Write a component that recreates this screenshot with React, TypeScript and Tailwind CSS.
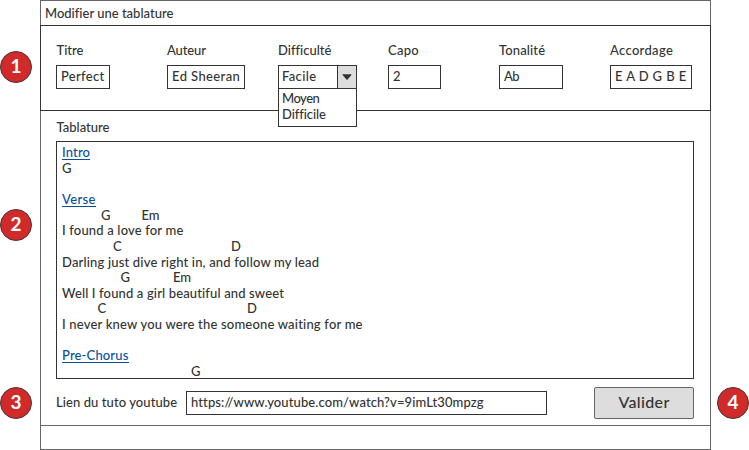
type Part = { text: string; className: string };

const lines: { parts: Part[]; link?: boolean }[] = [
  { link: true, parts: [{ text: "Intro", className: "tracking-[0.15px]" }] },
  { parts: [{ text: "G", className: "" }] },
  { parts: [] },
  { link: true, parts: [{ text: "Verse", className: "tracking-[0.35px]" }] },
  { parts: [{ text: "G", className: "w-[40.5px] ml-[39px]" }, { text: "Em", className: "" }] },
  { parts: [{ text: "I found a love for me", className: "tracking-[0.17px]" }] },
  { parts: [{ text: "C", className: "w-[118px] ml-[51px]" }, { text: "D", className: "" }] },
  { parts: [{ text: "Darling just dive right in, and follow my lead", className: "tracking-[0.17px]" }] },
  { parts: [{ text: "G", className: "w-[52.5px] ml-[58.5px]" }, { text: "Em", className: "" }] },
  { parts: [{ text: "Well I found a girl beautiful and sweet", className: "tracking-[0.14px]" }] },
  { parts: [{ text: "C", className: "w-[149.5px] ml-[35.5px]" }, { text: "D", className: "" }] },
  { parts: [{ text: "I never knew you were the someone waiting for me", className: "tracking-[0.19px]" }] },
  { parts: [] },
  { link: true, parts: [{ text: "Pre-Chorus", className: "tracking-[0.15px]" }] },
  { parts: [{ text: "G", className: "ml-[129px]" }] },
];

function Badge({ n, className }: { n: number; className: string }) {
  return (
    <div
      className={
        "flex size-8 shrink-0 items-center justify-center rounded-full border border-[#4a3535] bg-[#d02a2a] pb-[3px] text-[19px] leading-none font-bold text-white " +
        className
      }
    >
      {n}
    </div>
  );
}

function Field({ label, value, column, box, labelClass = "", valueClass = "" }: {
  label: string;
  value: string;
  column: string;
  box: string;
  labelClass?: string;
  valueClass?: string;
}) {
  return (
    <div className={"shrink-0 " + column}>
      <div className={"h-[23px] leading-4 " + labelClass}>{label}</div>
      <div className={"h-6 border border-[#333] pl-1 leading-[21px] " + box + " " + valueClass}>{value}</div>
    </div>
  );
}

function Difficulty() {
  return (
    <div className="w-[110px] shrink-0">
      <div className="h-[23px] leading-4">Difficulté</div>
      <div className="relative flex h-6 w-[79px] border border-[#333] leading-[21px]">
        <span className="flex-1 pl-[3px] tracking-[0.34px]">Facile</span>
        <span className="flex w-[19px] items-center justify-center border-l border-[#333] bg-[#ddd]">
          <svg width="10" height="6" viewBox="0 0 10 6" fill="#333">
            <path d="M1 .2h8q1 0 .4.8L5.6 5.4q-.6.6-1.2 0L.6 1Q0 .2 1 .2Z" />
          </svg>
        </span>
        <div className="absolute top-[22px] -left-px z-10 h-[39px] w-[79px] border border-[#333] bg-white pt-px pl-[3px] leading-4">
          <div className="tracking-[-0.5px]">Moyen</div>
          <div className="tracking-[-0.1px]">Difficile</div>
        </div>
      </div>
    </div>
  );
}

export default function App() {
  return (
    <div className="flex h-[450px] w-[749px] overflow-hidden bg-white font-['Lato','Open_Sans',sans-serif] text-[13px] font-medium whitespace-nowrap text-[#333] [font-variant-ligatures:none]">
      <div className="w-10 shrink-0">
        <Badge n={1} className="mt-[51px]" />
        <Badge n={2} className="mt-[126px]" />
        <Badge n={3} className="mt-[146px]" />
      </div>

      <main className="flex w-[671px] shrink-0 flex-col border border-[#666]">
        <h1 className="h-6 shrink-0 pl-[4px] leading-6">Modifier une tablature</h1>

        <section className="-mx-px flex h-[86px] shrink-0 border border-[#333] pt-4 pl-[15px]">
          <Field label="Titre" value="Perfect" column="w-[111px]" box="w-[54px]" labelClass="pl-[0.5px]" valueClass="tracking-[0.3px]" />
          <Field label="Auteur" value="Ed Sheeran" column="w-[111px]" box="w-[78px]" labelClass="tracking-[-0.1px]" valueClass="tracking-[0.4px]" />
          <Difficulty />
          <Field label="Capo" value="2" column="w-[111px]" box="w-[53px]" labelClass="tracking-[0.3px]" />
          <Field label="Tonalité" value="Ab" column="w-[111px]" box="w-[64px]" labelClass="tracking-[0.13px]" valueClass="tracking-[-0.6px]" />
          <Field label="Accordage" value="E A D G B E" column="w-[82px]" box="w-[82px]" labelClass="tracking-[0.33px]" valueClass="tracking-[0.4px]" />
        </section>

        <section className="flex h-[314px] shrink-0 flex-col pr-4 pl-[15px]">
          <div className="h-[30px] shrink-0 pt-2 pl-[0.5px] leading-4">Tablature</div>
          <div className="h-[238px] w-[638px] shrink-0 overflow-hidden border border-[#333] pt-[3.4px] pl-[5px]">
            {lines.map((line, i) => (
              <div key={i} className="flex h-[15.6px] leading-[15.6px]">
                {line.parts.map((part) => (
                  <span
                    key={part.text}
                    className={
                      (line.link ? "h-[15px] border-b border-[#0b4f9c] text-[#0b4f9c] " : "") + part.className
                    }
                  >
                    {part.text}
                  </span>
                ))}
              </div>
            ))}
          </div>
          <div className="mt-2 flex h-8 shrink-0 items-center">
            <label className="w-[130px] tracking-[0.08px]">Lien du tuto youtube</label>
            <div className="h-6 w-[361px] border border-[#333] pl-1 leading-[21px] tracking-[0.11px]">
              https://www.youtube.com/watch?v=9imLt30mpzg
            </div>
            <button className="ml-auto h-8 w-[100px] rounded-[2px] border border-[#666] bg-[#ddd] pb-[2px] text-[16px] leading-7 tracking-[0.35px]">
              Valider
            </button>
          </div>
        </section>

        <footer className="flex-1 border-t border-[#666]" />
      </main>

      <div className="w-[38px] shrink-0 pl-[6px]">
        <Badge n={4} className="mt-[387px]" />
      </div>
    </div>
  );
}
